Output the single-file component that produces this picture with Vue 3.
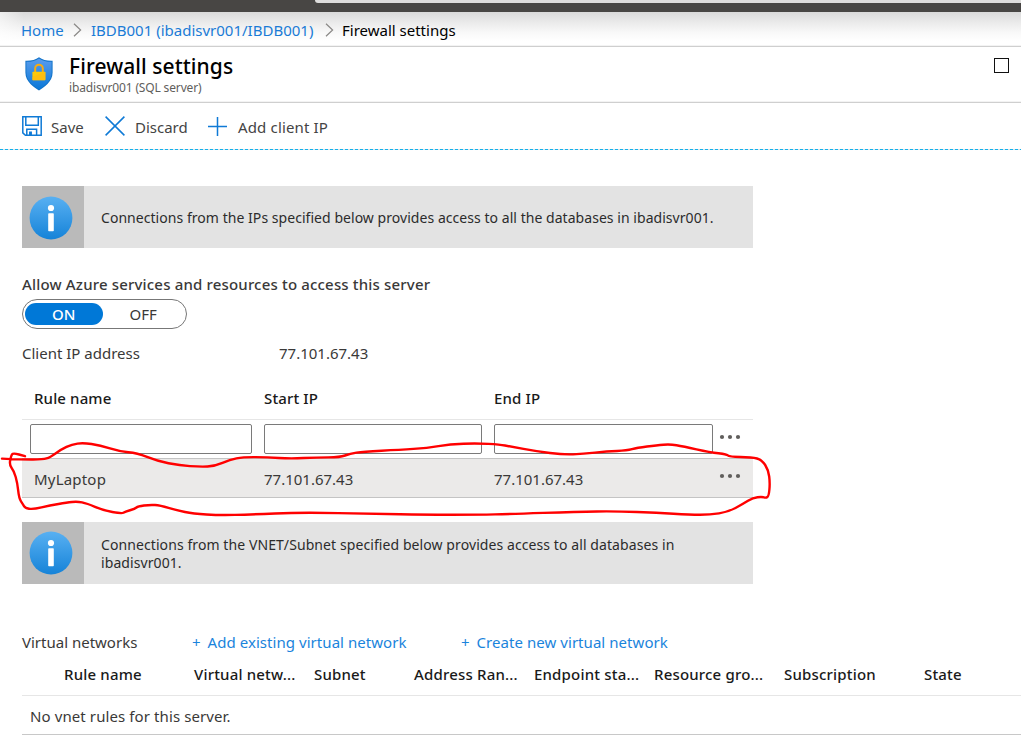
<script setup>
const vnetColumns = ['Rule name', 'Virtual netw...', 'Subnet', 'Address Ran...', 'Endpoint sta...', 'Resource gro...', 'Subscription', 'State']

// Free-hand outline around the highlighted firewall rule
const stroke = [
  [2, 458.6], [23, 459.6], [43, 459.4], [50, 457.5], [61, 449.5], [72, 444.4], [83, 442.8], [100, 445.2], [120, 451.6], [137, 452.8],
  [157, 461], [180, 465.4], [200, 466.8], [215, 466.2], [230, 459.7], [243, 457], [268, 457.2], [290, 458.7], [317, 457.4], [340, 457.3],
  [350, 453.7], [363, 451.6], [400, 449.8], [427, 448], [450, 444.2], [477, 443.2], [500, 444.6], [510, 446.4], [537, 451.4], [563, 454.7],
  [583, 454], [607, 451.3], [627, 450.6], [637, 447.8], [657, 445.3], [670, 444.2], [683, 446.3], [710, 452.3], [727, 454.3], [729, 456.9],
  [752, 457], [762, 460], [768.4, 470], [770, 483], [768.8, 496], [766, 498], [762, 496.7], [753, 497.7], [743, 504], [728, 512],
  [710, 514.7], [690, 514.7], [657, 512.8], [617, 511.2], [577, 511.7], [510, 514], [480, 514.7], [423, 514.7], [377, 513.8], [300, 512.4],
  [250, 514.5], [220, 515.3], [193, 513.7], [177, 510.3], [160, 505.4], [150, 504.7], [138, 506.3], [135, 508.7], [125, 511.8], [121.7, 513.7],
  [103, 510.3], [87, 503.5], [77, 501.4], [67, 502.7], [50, 505.4], [33, 509.4], [25, 508], [23, 504.3], [19, 498.3], [17.4, 483],
  [14, 471], [9.3, 465], [11, 456], [13, 452.8], [25, 456.2],
]
const outline = stroke.slice(1, -1).reduce((d, [x, y], i) => {
  const [nx, ny] = stroke[i + 2]
  return `${d} Q${x} ${y} ${(x + nx) / 2} ${(y + ny) / 2}`
}, `M${stroke[0]}`) + ` L${stroke[stroke.length - 1]}`
</script>

<template>
  <div class="page">
    <div class="topbar"><div class="tab"></div></div>

    <nav class="crumbs">
      <a class="c1">Home</a>
      <svg class="chev" width="9" height="14" viewBox="0 0 9 14"><path d="M1 .8 7.6 7 1 13.2" /></svg>
      <a class="c2">IBDB001 (ibadisvr001/IBDB001)</a>
      <svg class="chev" width="9" height="14" viewBox="0 0 9 14"><path d="M1 .8 7.6 7 1 13.2" /></svg>
      <span>Firewall settings</span>
    </nav>

    <header class="head">
      <svg class="shield" width="28" height="34" viewBox="0 0 28 34">
        <defs>
          <linearGradient id="sh" x1="0" y1="0" x2="0" y2="1"><stop offset="0" stop-color="#5a9cec" /><stop offset="1" stop-color="#0a78d8" /></linearGradient>
        </defs>
        <path d="M14 .3C17.5 3 22 4 27.600 3.800V15.500C27.600 25 18.500 30.500 14 33.500 9.500 30.500 .4 25 .4 15.500V3.800C6 4 10.500 3 14 .3Z" fill="#1173c9" />
        <path d="M14 1.400C17.500 3.900 21.800 4.900 26.600 4.800V15.500C26.600 24.300 18.200 29.500 14 32.300 9.800 29.500 1.400 24.300 1.400 15.500V4.800C6.200 4.900 10.500 3.900 14 1.400Z" fill="url(#sh)" />
        <path d="M10.200 15.500V11.500a3.800 3.800 0 0 1 7.600 0V15.500" fill="none" stroke="#f8ab10" stroke-width="2" />
        <rect x="7.400" y="14.800" width="13" height="8.400" rx=".7" fill="#fdc90a" />
        <path d="M7.400 23.200V20L20.400 14.800V22.500a.7.7 0 0 1-.7.7Z" fill="#fdb913" opacity=".7" />
      </svg>
      <div class="titles">
        <h1>Firewall settings</h1>
        <p>ibadisvr001 (SQL server)</p>
      </div>
      <div class="maximize"></div>
    </header>

    <div class="toolbar">
      <svg class="save" width="20" height="20" viewBox="0 0 20 20">
        <path d="M.8.8H19.200V19.200H3.400L.8 16.800ZM3.800 1V9.300H16.300V1M4.800 19V13.300H14.600V19M7.800 19V16.300H9.200V19" />
      </svg>
      <span class="t1">Save</span>
      <svg class="x" width="20" height="20" viewBox="0 0 20 20"><path d="M.6.6 19.400 19.400M19.400.6.6 19.400" /></svg>
      <span class="t2">Discard</span>
      <svg class="plus" width="19" height="19" viewBox="0 0 19 19"><path d="M9.500 0V19M0 9.500H19" /></svg>
      <span class="t3">Add client IP</span>
    </div>
    <svg class="dashes" width="1021" height="1"><path d="M0 .5H1021" /></svg>

    <main>
      <section class="info">
        <div class="info-icon">
          <svg width="44" height="44" viewBox="0 0 44 44">
            <defs><linearGradient id="ic" x1="0" y1="0" x2="0" y2="1"><stop offset="0" stop-color="#58b0f2" /><stop offset="1" stop-color="#1683d8" /></linearGradient></defs>
            <circle cx="22" cy="22" r="21.400" fill="url(#ic)" /><circle cx="22" cy="12" r="3.100" fill="#fff" /><rect x="19.200" y="17.200" width="5.600" height="18" rx=".8" fill="#fff" />
          </svg>
        </div>
        <p>Connections from the IPs specified below provides access to all the databases in ibadisvr001.</p>
      </section>

      <div class="label">Allow Azure services and resources to access this server</div>
      <div class="toggle"><div class="on">ON</div><div class="off">OFF</div></div>

      <div class="client"><span>Client IP address</span><span>77.101.67.43</span></div>

      <section class="rules">
        <div class="row hd"><span>Rule name</span><span>Start IP</span><span>End IP</span></div>
        <div class="row edit">
          <input class="i1"><input class="i2"><input class="i3">
          <svg class="dots" width="22" height="6"><circle cx="3" cy="3" r="2.100" /><circle cx="11" cy="3" r="2.100" /><circle cx="19" cy="3" r="2.100" /></svg>
        </div>
        <div class="row data">
          <span>MyLaptop</span><span>77.101.67.43</span><span>77.101.67.43</span>
          <svg class="dots" width="22" height="6"><circle cx="3" cy="3" r="2.100" /><circle cx="11" cy="3" r="2.100" /><circle cx="19" cy="3" r="2.100" /></svg>
        </div>
      </section>

      <section class="info second">
        <div class="info-icon">
          <svg width="44" height="44" viewBox="0 0 44 44">
            <circle cx="22" cy="22" r="21.400" fill="url(#ic)" /><circle cx="22" cy="12" r="3.100" fill="#fff" /><rect x="19.200" y="17.200" width="5.600" height="18" rx=".8" fill="#fff" />
          </svg>
        </div>
        <p>Connections from the VNET/Subnet specified below provides access to all databases in<br>ibadisvr001.</p>
      </section>

      <div class="vnet">
        <span class="v0">Virtual networks</span>
        <a class="v1"><span class="add">+</span> Add existing virtual network</a>
        <a><span class="add">+</span> Create new virtual network</a>
      </div>
      <div class="vhead"><span v-for="c in vnetColumns" :key="c">{{ c }}</span></div>
      <div class="empty">No vnet rules for this server.</div>
    </main>

    <svg class="outline" width="1021" height="741"><path :d="outline" /></svg>
  </div>
</template>

<style>
body { background: #fff; }
</style>

<style scoped>
* { box-sizing: border-box; }
.page { position: relative; width: 1021px; height: 741px; overflow: hidden; font: 15px/20px "Noto Sans", "Open Sans", sans-serif; color: #3a3938; white-space: nowrap; }
p, h1 { margin: 0; }
.topbar { height: 12px; background: #484644; display: flex; justify-content: flex-end; }
.tab { width: 706px; height: 3px; background: #dedddc; border-bottom-left-radius: 3px; }

.crumbs { height: 35px; display: flex; align-items: flex-start; padding: 8px 0 0 21px; color: #000; border-bottom: 1px solid #cfcfcf; box-shadow: inset 0 -1px #f3f3f3; background: linear-gradient(90deg, #fff8, #fff0 24px), linear-gradient(#dadada, #ebebeb 11px, #f8f8f8 20px, #fff 29px); }
.crumbs a { color: #1a7bd6; }
.c1 { width: 52px; }
.c2 { width: 234px; }
.chev { margin: 3px 9px 0 0; flex: none; fill: none; stroke: #8a8886; stroke-width: 1.2; }
.c2 + .chev { margin-right: 8px; }

.head { height: 56px; display: flex; border-bottom: 1px solid #cfcfcf; box-shadow: inset 0 -1px #f3f3f3; }
.shield { margin: 10px 0 0 25px; flex: none; }
.titles { margin-left: 16px; padding-top: 5px; flex: 1; }
h1 { font-size: 21px; line-height: 28px; font-weight: 500; color: #000; letter-spacing: .07px; }
.titles p { font-size: 12px; line-height: 16px; color: #605e5c; letter-spacing: -.15px; }
.maximize { width: 15px; height: 15px; border: 1px solid #111; margin: 11px 12px 0 0; }

.toolbar { height: 46px; display: flex; padding: 14px 0 0 22px; color: #444; }
.toolbar svg { flex: none; fill: none; stroke: #0f7ad6; stroke-width: 1.5; margin-top: -1px; }
.t1 { margin-left: 9px; width: 54px; }
.t2 { margin-left: 10px; width: 73px; }
.t3 { margin-left: 11px; letter-spacing: .15px; }
.toolbar .plus { margin-top: 0; }
.dashes { display: block; background: #dde2e4; }
.dashes path { stroke: #12b0ec; stroke-dasharray: 3 2; }

main { padding-left: 22px; }
.info { margin-top: 36px; width: 731px; height: 62px; display: flex; align-items: center; background: #e3e3e3; font-size: 14px; line-height: 18px; color: #2c2c2c; letter-spacing: .045px; }
.info-icon { width: 62px; height: 62px; background: #bababa; display: grid; place-items: center; margin-right: 17px; padding: 1px 4px 0 0; }
.info svg { display: block; }
.info p { padding-top: 2px; }

.label { margin-top: 27px; height: 20px; font-weight: 500; letter-spacing: .17px; line-height: 19px; }
.toggle { margin-top: 4px; width: 165px; height: 30px; border: 1px solid #777; border-radius: 15px; padding: 3px 2px; display: flex; line-height: 22px; text-align: center; }
.on { width: 78px; height: 22px; border-radius: 11px; background: #0078d7; color: #fff; font-weight: 500; }
.off { width: 82px; }
.client { display: grid; grid-template-columns: 257px 1fr; margin-top: 14px; }

.rules { width: 731px; margin-top: 25px; }
.row { display: grid; grid-template-columns: 230px 230px 226px 1fr; padding-left: 12px; }
.hd { height: 32px; border-bottom: 1px solid #e6e6e6; font-weight: 500; color: #1a1a1a; letter-spacing: .13px; }
.edit { height: 38px; padding: 4px 0 0 8px; grid-template-columns: 234px 230px 226px 1fr; }
input { display: block; height: 30px; border: 1px solid #7a7a7a; border-radius: 2px; background: #fff; padding: 0; margin: 0; }
.i1 { width: 222px; }
.i2 { width: 218px; }
.i3 { width: 219px; }
.dots { display: block; fill: #605e5c; }
.edit .dots { margin: 10px 0 0 -1px; }
.data { height: 40px; padding-top: 10px; background: #ebeae9; border: solid #c4c4c4; border-width: 1px 0; }
.data .dots { margin: 4px 0 0 -1px; }
.data span:first-child { letter-spacing: .2px; }

.second { margin-top: 24px; letter-spacing: .085px; }
.second .info-icon { padding-top: 0; }

.vnet { display: flex; margin-top: 48px; }
.v0 { width: 170px; }
.v1 { width: 269px; }
.vnet a { color: #1a84dc; letter-spacing: .05px; }
.add { margin-right: 3px; }
.vhead { display: grid; grid-template-columns: 130px 120px 100px 120px 120px 130px 140px 1fr; padding: 12px 0 0 42px; height: 44px; border-bottom: 1px solid #e6e6e6; font-weight: 500; color: #1a1a1a; letter-spacing: .18px; }
.empty { height: 39px; padding: 10px 0 0 8px; border-bottom: 1px solid #c8c8c8; letter-spacing: .1px; }

.outline { position: absolute; left: 0; top: 0; pointer-events: none; }
.outline path { fill: none; stroke: #f00; stroke-width: 2.4; stroke-linecap: round; stroke-linejoin: round; }
</style>
